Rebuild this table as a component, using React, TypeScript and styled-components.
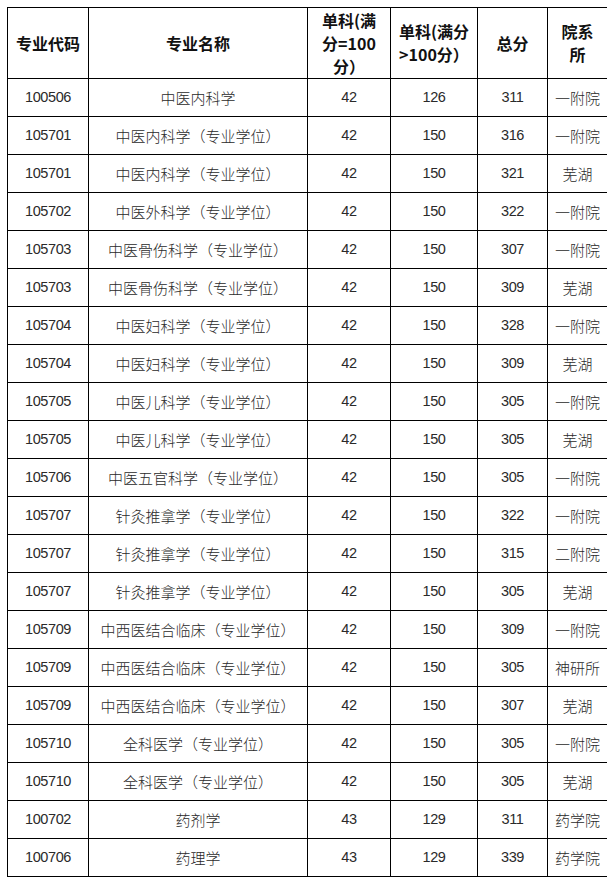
import React from 'react'
import styled, { createGlobalStyle } from 'styled-components'

const GlobalStyle = createGlobalStyle`
    body {
        margin: 7px;
        background: #fff;
        font-family: "Noto Sans CJK SC", "Liberation Sans", sans-serif;
    }
`

const Table = styled.table`
    border-collapse: collapse;
    table-layout: fixed;
    width: 601px;
    color: #1a1a1a;

    td, th {
        border: 1px solid #000;
        padding: 0;
        text-align: center;
        vertical-align: middle;
        overflow: hidden;
        white-space: nowrap;
    }
`

const HeadRow = styled.tr`
    height: 71px;
`

const HeadCell = styled.th`
    font-size: 16px;
    font-weight: 700;
    line-height: 23px;
    color: #111;
`

const Row = styled.tr`
    height: 38px;
`

const Cell = styled.td<{ $num?: boolean }>`
    font-size: ${p => (p.$num ? '14.5px' : '15px')};
    font-family: ${p => (p.$num ? '"Liberation Sans", "Noto Sans CJK SC", sans-serif' : '"Noto Sans CJK SC", sans-serif')};
    font-weight: ${p => (p.$num ? 400 : 300)};
    letter-spacing: ${p => (p.$num ? '-0.4px' : '0')};
    padding-bottom: ${p => (p.$num ? '2px' : '0')} !important;
    color: #2a2a2a;
`

const widths = [81, 219, 83, 87, 70, 60]

const rows: [string, string, string, string, string, string][] = [
    ['100506', '中医内科学', '42', '126', '311', '一附院'],
    ['105701', '中医内科学（专业学位）', '42', '150', '316', '一附院'],
    ['105701', '中医内科学（专业学位）', '42', '150', '321', '芜湖'],
    ['105702', '中医外科学（专业学位）', '42', '150', '322', '一附院'],
    ['105703', '中医骨伤科学（专业学位）', '42', '150', '307', '一附院'],
    ['105703', '中医骨伤科学（专业学位）', '42', '150', '309', '芜湖'],
    ['105704', '中医妇科学（专业学位）', '42', '150', '328', '一附院'],
    ['105704', '中医妇科学（专业学位）', '42', '150', '309', '芜湖'],
    ['105705', '中医儿科学（专业学位）', '42', '150', '305', '一附院'],
    ['105705', '中医儿科学（专业学位）', '42', '150', '305', '芜湖'],
    ['105706', '中医五官科学（专业学位）', '42', '150', '305', '一附院'],
    ['105707', '针灸推拿学（专业学位）', '42', '150', '322', '一附院'],
    ['105707', '针灸推拿学（专业学位）', '42', '150', '315', '二附院'],
    ['105707', '针灸推拿学（专业学位）', '42', '150', '305', '芜湖'],
    ['105709', '中西医结合临床（专业学位）', '42', '150', '309', '一附院'],
    ['105709', '中西医结合临床（专业学位）', '42', '150', '305', '神研所'],
    ['105709', '中西医结合临床（专业学位）', '42', '150', '307', '芜湖'],
    ['105710', '全科医学（专业学位）', '42', '150', '305', '一附院'],
    ['105710', '全科医学（专业学位）', '42', '150', '305', '芜湖'],
    ['100702', '药剂学', '43', '129', '311', '药学院'],
    ['100706', '药理学', '43', '129', '339', '药学院'],
]

export default function App() {
    return (
        <>
            <GlobalStyle />
            <Table>
                <colgroup>
                    {widths.map((w, i) => <col key={i} style={{ width: w }} />)}
                </colgroup>
                <thead>
                    <HeadRow>
                        <HeadCell>专业代码</HeadCell>
                        <HeadCell>专业名称</HeadCell>
                        <HeadCell>单科(满<br />分=100<br />分）</HeadCell>
                        <HeadCell>单科(满分<br />&gt;100分）</HeadCell>
                        <HeadCell>总分</HeadCell>
                        <HeadCell>院系<br />所</HeadCell>
                    </HeadRow>
                </thead>
                <tbody>
                    {rows.map((r, i) => (
                        <Row key={i}>
                            <Cell $num>{r[0]}</Cell>
                            <Cell>{r[1]}</Cell>
                            <Cell $num>{r[2]}</Cell>
                            <Cell $num>{r[3]}</Cell>
                            <Cell $num>{r[4]}</Cell>
                            <Cell>{r[5]}</Cell>
                        </Row>
                    ))}
                </tbody>
            </Table>
        </>
    )
}
